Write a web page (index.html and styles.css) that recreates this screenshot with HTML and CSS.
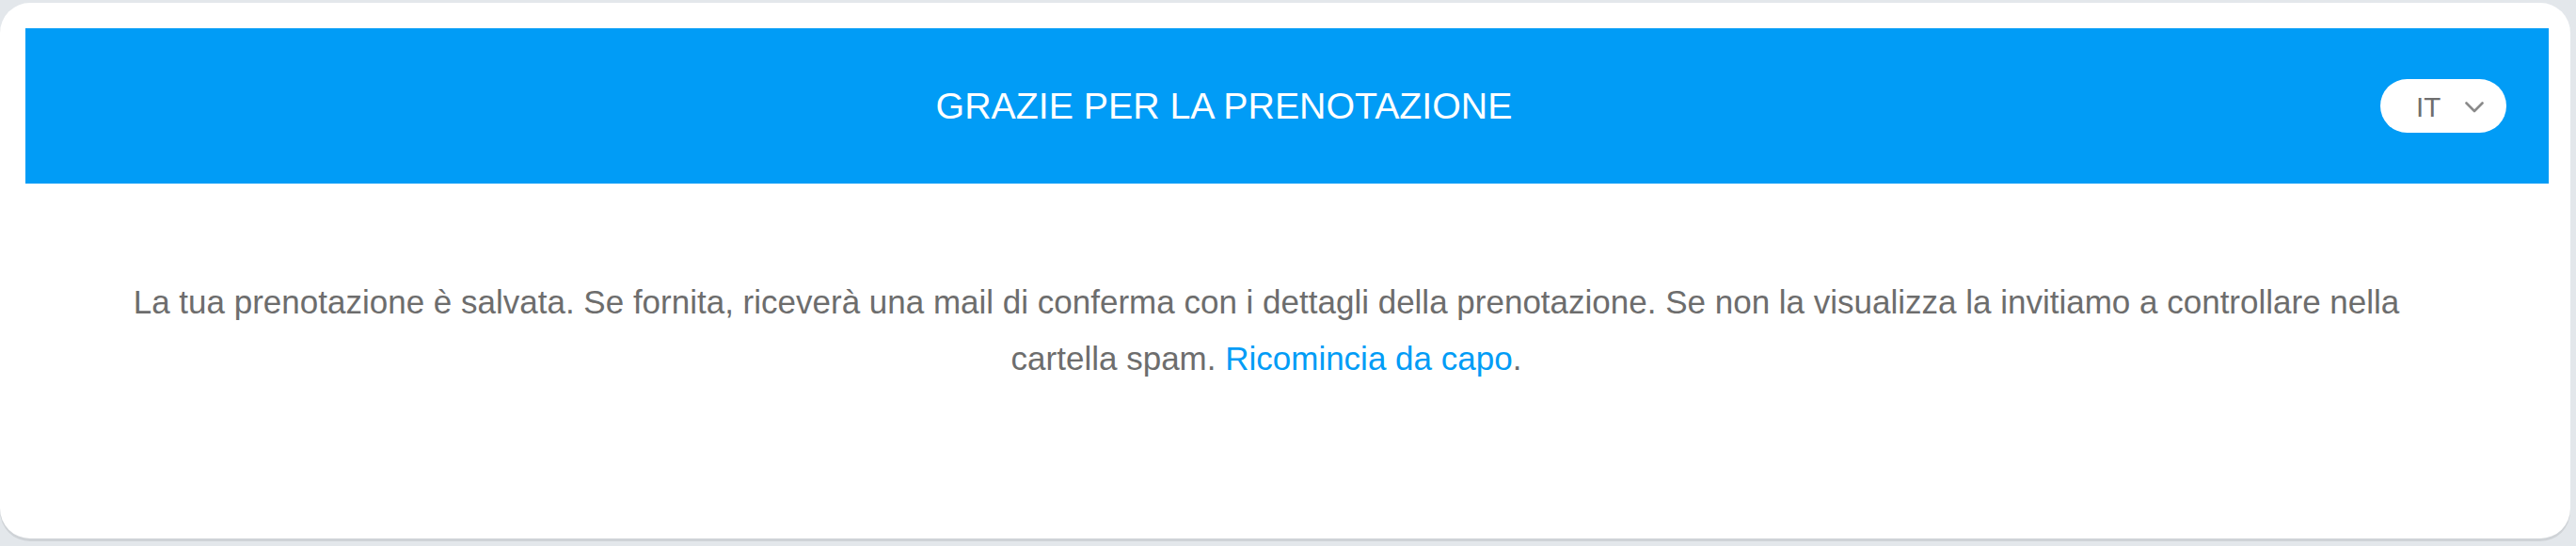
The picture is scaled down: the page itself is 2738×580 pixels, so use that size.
FILE: index.html
```html
<!DOCTYPE html>
<html lang="it">
<head>
<meta charset="utf-8">
<title>Grazie per la prenotazione</title>
<link rel="stylesheet" href="styles.css">
</head>
<body>
  <div class="card">
    <header class="bar">
      <h1 class="title">GRAZIE PER LA PRENOTAZIONE</h1>
      <button class="lang" type="button">
        <span class="lang-code">IT</span>
        <svg class="chev" width="20" height="12" viewBox="0 0 20 12" aria-hidden="true">
          <path d="M1.5 1.5 L10 10 L18.5 1.5" fill="none" stroke="#8a8a8a" stroke-width="2.6" stroke-linecap="round" stroke-linejoin="round"/>
        </svg>
      </button>
    </header>
    <section class="content">
      <p class="msg">La tua prenotazione è salvata. Se fornita, riceverà una mail di conferma con i dettagli della prenotazione. Se non la visualizza la invitiamo a controllare nella cartella spam. <a class="link" href="#">Ricomincia da capo</a>.</p>
    </section>
  </div>
</body>
</html>
```

FILE: styles.css
```css
html, body {
  margin: 0;
  padding: 0;
}

body {
  background: #e3e7eb;
  padding: 3px 6px 0 0;
  font-family: "Liberation Sans", Arial, Helvetica, sans-serif;
  height: 580px;
  box-sizing: border-box;
  overflow: hidden;
}

.card {
  background: #ffffff;
  border-radius: 32px;
  box-shadow: 0 3px 0 #cfd3d7;
  padding: 27px 23px 0 27px;
  height: 569px;
  box-sizing: border-box;
  display: flex;
  flex-direction: column;
}

.bar {
  background: #019cf6;
  height: 165px;
  display: flex;
  align-items: center;
  padding: 0 45px;
  flex: none;
}

.title {
  flex: 1;
  margin: 0;
  text-align: center;
  color: #ffffff;
  font-weight: normal;
  font-size: 39.3px;
  line-height: 1;
}

.lang {
  width: 134px;
  height: 57px;
  border: none;
  border-radius: 29px;
  background: #ffffff;
  display: flex;
  align-items: center;
  padding: 0 24px 0 38px;
  box-sizing: border-box;
  font-family: inherit;
  cursor: pointer;
}

.lang-code {
  flex: 1;
  text-align: left;
  color: #6e6e6e;
  font-size: 29.5px;
  line-height: 1;
  padding-top: 2px;
}

.chev {
  display: block;
  margin-top: 2px;
}

.content {
  padding: 96px 122px 0 78px;
  flex: 1;
}

.msg {
  margin: 0;
  text-align: center;
  color: #6d6d6d;
  font-size: 35px;
  line-height: 59.5px;
}

.link {
  color: #019cf6;
  text-decoration: none;
}
```
